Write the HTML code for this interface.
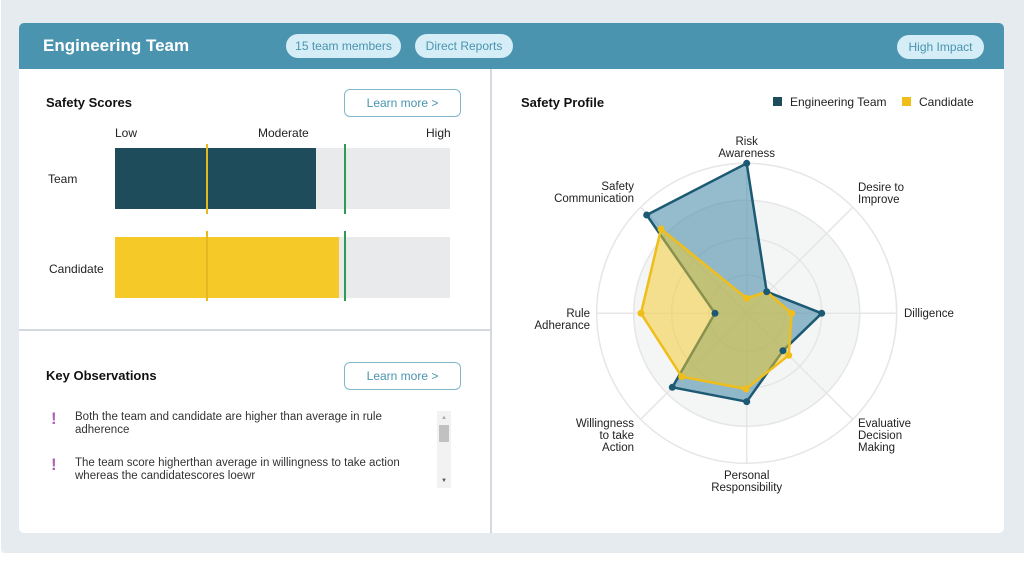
<!DOCTYPE html>
<html><head><meta charset="utf-8"><style>
*{margin:0;padding:0;box-sizing:border-box}
body{width:1024px;height:576px;background:#fff;position:relative;overflow:hidden;font-family:"Liberation Sans",sans-serif;color:#222}
.a{position:absolute}
.bg{left:1px;top:0;width:1023px;height:553px;background:#e6ebef;border-radius:0 0 0 4px}
.card{left:19px;top:23px;width:985px;height:510px;background:#fff;border-radius:5px;overflow:hidden}
.hdr{left:0;top:0;width:985px;height:46px;background:#4a94af}
.pill{background:#d4edf6;color:#4a94af;border-radius:12px;font-size:12px;height:24px;line-height:24px;text-align:center}
.h3{font-weight:bold;font-size:13px;color:#111}
.btn{border:1.5px solid #7fb8cc;color:#4a94af;border-radius:6px;font-size:12px;text-align:center;background:#fff}
.lbl{font-size:12px;color:#222}
.obs{font-size:11.5px;color:#333;line-height:13px}
.ex{color:#b063b8;font-weight:bold;font-size:17px}
</style></head><body>
<div class="a bg"></div>
<div class="a card">
 <div class="a hdr"></div>
 <div class="a" style="left:24px;top:13px;color:#fff;font-weight:bold;font-size:17px">Engineering Team</div>
 <div class="a pill" style="left:267px;top:11px;width:115px">15 team members</div>
 <div class="a pill" style="left:396px;top:11px;width:98px">Direct Reports</div>
 <div class="a pill" style="left:878px;top:12px;width:87px">High Impact</div>
 <div class="a" style="left:471px;top:46px;width:2px;height:464px;background:#d3d9de"></div>
 <div class="a" style="left:0;top:306px;width:471px;height:2px;background:#d3d9de"></div>
</div>
<!-- Safety scores -->
<div class="a h3" style="left:46px;top:95px">Safety Scores</div>
<div class="a btn" style="left:344px;top:89px;width:117px;height:28px;line-height:26px">Learn more &gt;</div>
<div class="a lbl" style="left:115px;top:126px">Low</div>
<div class="a lbl" style="left:258px;top:126px">Moderate</div>
<div class="a lbl" style="left:426px;top:126px">High</div>
<div class="a lbl" style="left:48px;top:172px">Team</div>
<div class="a lbl" style="left:49px;top:262px">Candidate</div>
<div class="a" style="left:115px;top:148px;width:335px;height:61px;background:#e8eaeb"></div>
<div class="a" style="left:115px;top:148px;width:201px;height:61px;background:#1f4c5b"></div>
<div class="a" style="left:115px;top:237px;width:335px;height:61px;background:#e8eaeb"></div>
<div class="a" style="left:115px;top:237px;width:224px;height:61px;background:#f4c928"></div>
<div class="a" style="left:206px;top:144px;width:2px;height:70px;background:#e5b820"></div>
<div class="a" style="left:206px;top:231px;width:2px;height:70px;background:#e5b820"></div>
<div class="a" style="left:344px;top:144px;width:2px;height:70px;background:#2e9a55"></div>
<div class="a" style="left:344px;top:231px;width:2px;height:70px;background:#2e9a55"></div>
<!-- Key observations -->
<div class="a h3" style="left:46px;top:368px">Key Observations</div>
<div class="a btn" style="left:344px;top:362px;width:117px;height:28px;line-height:26px">Learn more &gt;</div>
<div class="a ex" style="left:51px;top:409px">!</div>
<div class="a obs" style="left:75px;top:411px;width:340px">Both the team and candidate are higher than average in rule adherence</div>
<div class="a ex" style="left:51px;top:455px">!</div>
<div class="a obs" style="left:75px;top:457px;width:340px">The team score higherthan average in willingness to take action whereas the candidatescores loewr</div>
<div class="a" style="left:437px;top:411px;width:14px;height:77px;background:#f2f2f2"></div>
<div class="a" style="left:439px;top:425px;width:10px;height:17px;background:#c1c1c1"></div>
<div class="a" style="left:441px;top:415px;font-size:6px;color:#aaa">▲</div>
<div class="a" style="left:441px;top:478px;font-size:6px;color:#555">▼</div>
<!-- Safety profile -->
<div class="a h3" style="left:521px;top:95px">Safety Profile</div>
<div class="a" style="left:773px;top:97px;width:9px;height:9px;background:#1f4c5b"></div>
<div class="a lbl" style="left:790px;top:95px">Engineering Team</div>
<div class="a" style="left:902px;top:97px;width:9px;height:9px;background:#f0be1a"></div>
<div class="a lbl" style="left:919px;top:95px">Candidate</div>
<svg class="a" style="left:0;top:0" width="1024" height="576" viewBox="0 0 1024 576">
 <g transform="translate(746.7,313.3)">
  <circle r="150" fill="#fff" stroke="#e6e6e6" stroke-width="1.5"/>
  <circle r="113" fill="#f4f5f5" stroke="#e6e6e6" stroke-width="1.5"/>
  <circle r="75" fill="none" stroke="#e6e6e6" stroke-width="1.5"/>
  <circle r="38" fill="none" stroke="#e6e6e6" stroke-width="1.5"/>
  <g stroke="#e6e6e6" stroke-width="1.5">
   <line x1="0" y1="-150" x2="0" y2="150"/><line x1="-150" y1="0" x2="150" y2="0"/>
   <line x1="-106" y1="-106" x2="106" y2="106"/><line x1="-106" y1="106" x2="106" y2="-106"/>
  </g>
  <polygon points="0,-150 20,-21.6 75,0 36.3,37.4 0,88.4 -74.4,74 -31.7,0 -100,-98.3" fill="#4d8fab" fill-opacity="0.6" stroke="#1c5a74" stroke-width="2.5" stroke-linejoin="round"/>
  <polygon points="0,-15 20,-21.6 45,0 42,42 -0.7,75.7 -65,63.4 -105.7,0 -85.7,-84.3" fill="#f4c928" fill-opacity="0.5" stroke="#f0be1a" stroke-width="2.5" stroke-linejoin="round"/>
  <g fill="#1c5a74"><circle cx="0" cy="-150" r="3.5"/><circle cx="20" cy="-21.6" r="3.5"/><circle cx="75" cy="0" r="3.5"/><circle cx="36.3" cy="37.4" r="3.5"/><circle cx="0" cy="88.4" r="3.5"/><circle cx="-74.4" cy="74" r="3.5"/><circle cx="-31.7" cy="0" r="3.5"/><circle cx="-100" cy="-98.3" r="3.5"/></g>
  <g fill="#f0be1a"><circle cx="0" cy="-15" r="3.5"/><circle cx="45" cy="0" r="3.5"/><circle cx="42" cy="42" r="3.5"/><circle cx="-0.7" cy="75.7" r="3.5"/><circle cx="-65" cy="63.4" r="3.5"/><circle cx="-105.7" cy="0" r="3.5"/><circle cx="-85.7" cy="-84.3" r="3.5"/></g>
 </g>
 <g font-family="Liberation Sans, sans-serif" font-size="11.5" fill="#222">
  <text x="746.7" y="145" text-anchor="middle">Risk</text><text x="746.7" y="157" text-anchor="middle">Awareness</text>
  <text x="858" y="191">Desire to</text><text x="858" y="203">Improve</text>
  <text x="904" y="317">Dilligence</text>
  <text x="858" y="427">Evaluative</text><text x="858" y="439">Decision</text><text x="858" y="451">Making</text>
  <text x="746.7" y="479" text-anchor="middle">Personal</text><text x="746.7" y="491" text-anchor="middle">Responsibility</text>
  <text x="634" y="427" text-anchor="end">Willingness</text><text x="634" y="439" text-anchor="end">to take</text><text x="634" y="451" text-anchor="end">Action</text>
  <text x="590" y="317" text-anchor="end">Rule</text><text x="590" y="329" text-anchor="end">Adherance</text>
  <text x="634" y="190" text-anchor="end">Safety</text><text x="634" y="202" text-anchor="end">Communication</text>
 </g>
</svg>
</body></html>
